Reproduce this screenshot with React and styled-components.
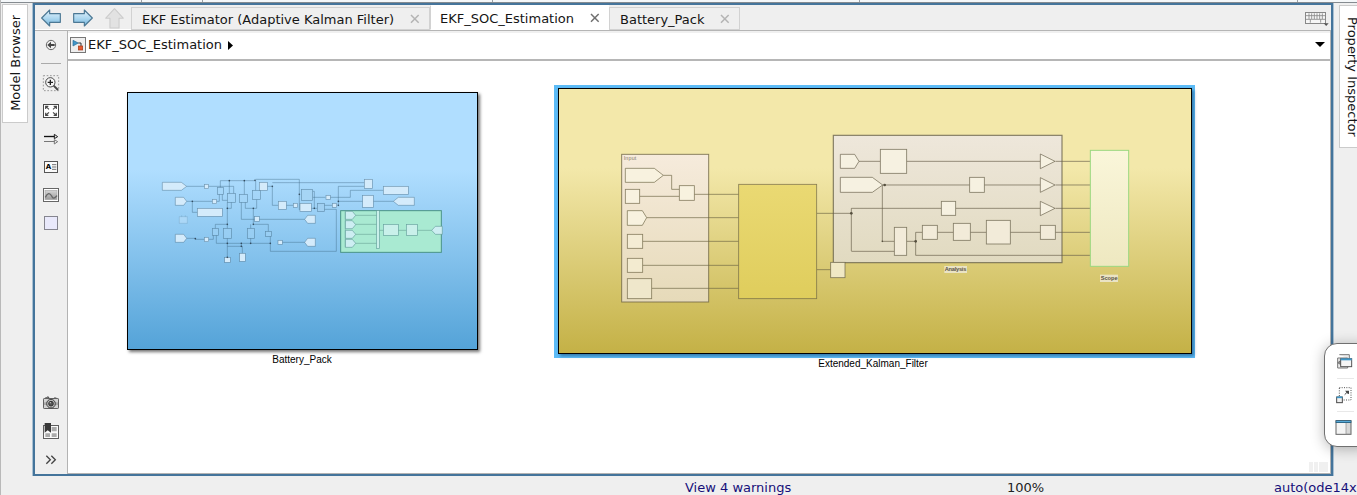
import React from "react";
import styled, { createGlobalStyle } from "styled-components";

const Global = createGlobalStyle`
  *{box-sizing:border-box}
  body{margin:0;background:#efefef;font-family:"DejaVu Sans",sans-serif;font-size:13px;color:#151515;overflow:hidden}
  svg{display:block;flex:none}
`;

const Window = styled.div`
  position:relative;width:1357px;height:495px;overflow:hidden;display:flex;flex-direction:column;background:#efefef;border-left:1px solid #b9b9b9;
`;
const TopEdge = styled.div`
  height:3px;flex:none;display:flex;background:#f4f7f9;border-bottom:1px solid #858b90;
`;
const EdgeCell = styled.div`
  width:${p => p.$w}px;border-right:1px solid #9aa0a5;
`;
const Main = styled.div`
  display:flex;height:473px;flex:none;
`;
const DockSide = styled.div`
  display:flex;flex:none;width:${p => p.$w}px;padding:${p => p.$pad};overflow:hidden;
`;
const DockTab = styled.div`
  flex:none;display:flex;justify-content:center;align-items:center;width:26px;height:${p => p.$h}px;padding-bottom:${p => p.$lift || 0}px;background:#fff;border:1px solid #cbcbcb;
`;
const DockLabel = styled.span`
  writing-mode:vertical-rl;white-space:nowrap;line-height:15px;
  transform:${p => (p.$up ? "rotate(180deg)" : "none")};
`;
const Editor = styled.div`
  width:1300px;flex:none;display:flex;flex-direction:column;border:2px solid #44749b;box-shadow:-1px 0 #a9c0d2,1px 0 #a9c0d2;
`;
const TabBar = styled.div`
  height:26px;flex:none;display:flex;align-items:flex-end;border-bottom:1px solid #b5b5b5;background:#efefef;
`;
const NavGroup = styled.div`
  width:96px;height:25px;display:flex;align-items:center;gap:12px;padding:2px 0 0 6px;border-bottom:1px solid #fff;
`;
const Tab = styled.div`
  width:${p => p.$w}px;height:${p => (p.$active ? 25 : 23)}px;display:flex;align-items:center;justify-content:space-between;
  padding:0 ${p => (p.$active ? 8 : 9)}px 0 10px;background:${p => (p.$active ? "#fff" : "#efefef")};
  border:1px solid ${p => (p.$active ? "#fff" : "#d2d2d2")};border-left-color:#d2d2d2;white-space:nowrap;
`;
const TabText = styled.span`
  line-height:16px;padding-top:${p => p.$drop || 0}px;margin-left:${p => p.$nudge || 0}px;
`;
const KeyboardSlot = styled.div`
  margin-left:auto;padding:0 2px 3px 0;
`;
const Body = styled.div`
  flex:1;display:flex;min-height:0;
`;
const Palette = styled.div`
  width:33px;flex:none;display:flex;flex-direction:column;border-right:1px solid #b3b3b3;
`;
const Tool = styled.div`
  height:28px;display:flex;justify-content:center;align-items:center;
`;
const Divider = styled.div`
  height:1px;margin:4px 6px 5px 6px;background:#aaa;
`;
const Spacer = styled.div`
  flex:1;
`;
const Pane = styled.div`
  flex:1;min-width:0;display:flex;flex-direction:column;border-right:1px solid #b3b3b3;border-bottom:1px solid #b3b3b3;
`;
const Breadcrumb = styled.div`
  height:30px;flex:none;display:flex;align-items:center;gap:2px;padding:0 5px 2px 2px;background:#fff;
  border-top:2px solid #f0f0f0;border-bottom:2px solid #b6b6b6;
`;
const CrumbMark = styled.span`
  display:flex;margin-left:4px;
`;
const DropMark = styled.span`
  display:flex;margin-left:auto;padding-bottom:2px;
`;
const Canvas = styled.div`
  position:relative;flex:1;background:#fff;
`;
const Block = styled.div`
  position:absolute;left:${p => p.$x}px;top:${p => p.$y}px;width:${p => p.$w}px;height:${p => p.$h}px;
  border:1px solid #000;background:${p => p.$bg};
  box-shadow:${p => (p.$selected ? "2px 2px 3px rgba(0,40,80,.45)" : "2px 2px 3px rgba(0,0,0,.55)")};
`;
const Halo = styled.div`
  position:absolute;left:486px;top:24px;width:641px;height:273px;background:#5dbcf7;
`;
const BlockName = styled.div`
  position:absolute;left:${p => p.$x}px;top:${p => p.$y}px;width:140px;text-align:center;
  font:10px/12px "Liberation Sans",Arial,sans-serif;color:#000;
`;
const Grip = styled.div`
  position:absolute;right:2px;bottom:1px;display:flex;gap:1px;
`;
const GripBar = styled.i`
  width:${p => p.$w}px;height:10px;background:#f0f0f0;
`;
const FloatPanel = styled.div`
  position:absolute;left:1323px;top:343px;width:50px;height:104px;display:flex;flex-direction:column;align-items:flex-start;
  padding:9px 0 0 10px;gap:7px;border:1px solid #707070;border-radius:13px;background:#fff;box-shadow:0 2px 14px rgba(0,0,0,.28);
`;
const PanelRule = styled.div`
  width:17px;height:1px;margin-left:2px;background:#e8e8e8;
`;
const Status = styled.div`
  flex:1;display:flex;padding-top:4px;line-height:16px;white-space:nowrap;
`;
const StatusItem = styled.span`
  flex:none;width:${p => p.$w}px;padding-left:${p => p.$pad || 0}px;color:${p => p.$c || "#16107a"};
`;

const Icon = ({ children, w = 54, h = 54 }) => (
  <svg width={w / 3} height={h / 3} viewBox={`0 0 ${w} ${h}`} fill="none" stroke="#484848" strokeWidth="3">{children}</svg>
);

const Close = ({ dark }) => (
  <Icon w={33} h={30}><path d="M6 3L29 26M29 3L6 26" stroke={dark ? "#707070" : "#b4b4b4"} strokeWidth="4.5" /></Icon>
);

const NavArrow = ({ flip }) => (
  <svg width="20" height="18" viewBox="0 0 60 54">
    <defs><linearGradient id="nav" x2="0" y2="1"><stop stopColor="#e3f3fc" /><stop offset=".5" stopColor="#b0d9f0" /><stop offset="1" stopColor="#70b3dc" /></linearGradient></defs>
    <path transform={flip ? "translate(60 0) scale(-1 1)" : undefined} d="M2 27L26 3V14H58V40H26V51Z" fill="url(#nav)" stroke="#4c7894" strokeWidth="3.5" strokeLinejoin="round" />
  </svg>
);

const icons = {
  hide: <Icon><circle cx="27" cy="27" r="14" strokeWidth="3" stroke="#666" /><path d="M16 27L27 17V24H38V30H27V37Z" fill="#444" stroke="none" /></Icon>,
  zoom: <Icon><rect x="4" y="5" width="46" height="45" strokeWidth="2.5" strokeDasharray="5 5" stroke="#888" /><circle cx="25" cy="25" r="14" fill="#f7f7f7" /><path d="M17 25H33M25 17V33" stroke="#222" strokeWidth="4" /><path d="M35 35L48 48" strokeWidth="6" /></Icon>,
  fit: <Icon><rect x="4.5" y="7.5" width="45" height="39" fill="#fff" /><g strokeWidth="3.5"><path d="M11 21V13H19M12 14L21 22M35 13H43V21M42 14L33 22M11 32V40H19M12 39L21 31M35 40H43V32M42 39L33 31" /></g></Icon>,
  signals: <Icon><path d="M6 19.5H38" stroke="#111" strokeWidth="4" /><path d="M37 13L47 20L37 26Z" stroke="#222" /><path d="M6 34.5H38M37 29L47 35L37 42Z" stroke="#777" /></Icon>,
  note: <svg width="18" height="18" viewBox="0 0 54 54"><rect x="7.5" y="10.5" width="39" height="33" fill="#fafafa" stroke="#555" strokeWidth="3" /><text x="11" y="34" fontFamily="DejaVu Sans" fontWeight="bold" fontSize="21">A</text><path d="M30 20H43M30 27H43M30 34H43" stroke="#555" strokeWidth="2.5" /></svg>,
  image: <Icon><defs><linearGradient id="img" x2="0" y2="1"><stop stopColor="#d5d5d5" /><stop offset="1" stopColor="#999" /></linearGradient></defs><rect x="4.5" y="7.5" width="45" height="39" fill="#fff" stroke="#666" /><rect x="9" y="13" width="36" height="28" fill="url(#img)" stroke="#aaa" strokeWidth="2" /><path d="M10 34Q20 14 29 30Q34 43 45 29" stroke="#666" strokeWidth="4" /></Icon>,
  area: <Icon><rect x="7.5" y="7.5" width="39" height="39" fill="#e9e9fb" stroke="#85858f" /></Icon>,
  camera: <Icon><path d="M9 9H15V6H20V9M36 9H43" /><rect x="4.5" y="10.5" width="45" height="30" rx="2" fill="#d2d2d2" stroke="#606060" /><path d="M6 26H48" stroke="#aaa" strokeWidth="8" /><circle cx="27" cy="26" r="13" fill="#bbb" stroke="#444" /><circle cx="27" cy="26" r="7" fill="#555" stroke="#333" /><circle cx="25" cy="23" r="2" fill="#ccc" stroke="none" /></Icon>,
  book: <Icon><rect x="4.5" y="7.5" width="45" height="39" fill="#fafafa" stroke="#5e5e5e" /><path d="M10 31H24V42H10ZM29 31H44V42H29ZM29 12H44V25H29Z" fill="#aaa" stroke="none" /><path d="M8 0H27V29L17 22L8 29Z" fill="#383838" stroke="none" /></Icon>,
  more: <Icon><path d="M13 14L25 26L13 38M28 14L40 26L28 38" stroke="#444" strokeWidth="4" /></Icon>,
};

const Keyboard = () => (
  <svg width="24" height="16" viewBox="0 0 72 48">
    <rect x="1.5" y="4.5" width="60" height="33" fill="#f6f6f6" stroke="#888" strokeWidth="3" />
    <path d="M3 14H60M3 25H60" stroke="#888" strokeWidth="2.5" />
    <path d="M12 7V24M20 7V24M28 7V24M36 7V24M44 7V24M52 7V24M16 25V35M47 25V35" stroke="#888" strokeWidth="2.5" />
    <path d="M56 37H71L63.5 45Z" fill="#555" />
  </svg>
);

const ModelIcon = () => (
  <Icon w={48} h={48}>
    <rect x="1.5" y="1.5" width="45" height="45" fill="#eee" stroke="#777" />
    <path d="M9 10V27L25 18Z" fill="#4196c9" stroke="#286b94" strokeWidth="2" />
    <path d="M25 18H33V27" stroke="#333" /><rect x="25" y="27" width="13" height="12" fill="#e65a30" stroke="#a63815" strokeWidth="2" />
  </Icon>
);

const R = ({ b, ...rest }) => <rect x={b[0]} y={b[1]} width={b[2] - b[0]} height={b[3] - b[1]} {...rest} />;

const batteryLeft = [[253, 43, 266, 56], [277, 88, 290, 101], [253, 202, 266, 215], [418, 37, 442, 61], [475, 94, 499, 118], [520, 100, 533, 112], [404, 140, 418, 154], [474, 211, 487, 223], [314, 262, 331, 277], [359, 250, 376, 274], [232, 115, 307, 139]];
const batteryPlain = [[292, 52, 311, 73], [322, 70, 346, 97], [358, 73, 382, 97], [398, 61, 421, 89], [277, 175, 295, 196], [310, 175, 334, 205], [382, 175, 403, 205], [437, 184, 454, 199]];

const BatteryPreview = () => (
  <svg width="349" height="256" viewBox="128 93 349 256" fill="none">
    <g transform="translate(120 170) scale(.33333)" stroke="#3d6580" strokeOpacity=".6" strokeWidth="2">
      <path d="M200 49H341V70M301 52V32H407V61M328 32V70M373 32V73M407 28H538V120M200 94H277M290 94H298V73M217 94V127H232M307 73V91H322M322 97V175M322 115H334V97M364 97V148H510M376 97V115H410V89M400 115V163M286 175V163H322M400 163H445V184M392 175V163M200 205H226V208H253M266 208H280V196M289 196V220H450M322 205V262M392 205V220M322 229H367V250M364 220V229M451 199V244H510M442 49H457V106H475M457 38H510M499 106H520M487 217H510" />
      {batteryPlain.map((b, i) => <R key={i} b={b} fill="#a9d7f7" fillOpacity=".35" />)}
      <g fill="#d4ebfb">
        {batteryLeft.map((b, i) => <R key={i} b={b} />)}
        <path d="M127 37H184L200 49L184 61H127ZM166 82H191L200 94L191 106H166ZM166 193H191L200 205L191 217H166Z" />
        <path d="M178 140H202V160H178Z" fillOpacity=".35" strokeOpacity=".25" /><path d="M185 135V141M196 135V141" strokeOpacity=".2" />
      </g>
      <g fill="#234" fillOpacity=".8" stroke="none">{[[217, 94], [322, 115], [322, 163], [400, 115], [400, 163], [328, 32], [373, 32], [405, 31], [457, 49], [364, 220], [364, 229], [322, 220], [392, 220], [451, 220], [226, 206], [322, 262]].map((c, i) => <circle key={i} cx={c[0]} cy={c[1]} r="2.5" />)}</g>
    </g>
    <g transform="translate(290 170) scale(.33333)" stroke="#3d6580" strokeOpacity=".6" strokeWidth="2">
      <path d="M0 38H223M68 64H73V115M68 82H106M121 82H181V61H280M103 106H127M145 106V49H223M145 94H218M250 94H310M103 118H139V244H0M0 148H44M0 217H44M64 115H82" />
      <R b={[152, 122, 454, 247]} fill="#a9ead2" stroke="#418c7c" strokeOpacity=".9" strokeWidth="3" />
      <g fill="#d4ebfb">
        {[[223, 28, 247, 55], [218, 76, 250, 112], [280, 49, 355, 73], [30, 100, 64, 124], [108, 76, 121, 88], [127, 100, 140, 112]].map((b, i) => <R key={i} b={b} />)}
        <path d="M373 82H325L310 94L325 106H373ZM76 136H53L44 148L53 160H76ZM76 205H53L44 217L53 229H76Z" />
      </g>
      <R b={[34, 58, 68, 91]} fill="#a6d5f5" /><R b={[82, 100, 103, 124]} fill="#a0d0f2" />
      <path d="M196 136H260M196 163H260M196 193H260M196 220H260M268 181H425" stroke="#4d8077" />
      <g fill="#c9f0ea" stroke="#5e9997" strokeOpacity=".9">
        {[124, 152, 181, 208].map(y => <path key={y} d={`M166 ${y}H187L197 ${y + 12}L187 ${y + 24}H166Z`} fill="#cdeef2" />)}
        <R b={[260, 122, 268, 235]} /><R b={[280, 163, 325, 196]} /><R b={[349, 163, 382, 196]} />
        <path d="M457 169H436L425 181L436 193H457Z" fill="#cdeef2" />
      </g>
      <path d="M166 124V232" stroke="#5e9997" />
      <g fill="#234" fillOpacity=".8" stroke="none">{[[28, 73], [145, 94], [145, 106], [73, 115]].map((c, i) => <circle key={i} cx={c[0]} cy={c[1]} r="2.5" />)}</g>
    </g>
  </svg>
);

const FilterPreview = () => (
  <svg width="632" height="264" viewBox="559 89 632 264" fill="none">
    <defs>
      <linearGradient id="input" x2="0" y2="1"><stop stopColor="#f6ebdc" /><stop offset="1" stopColor="#e6dab9" /></linearGradient>
      <linearGradient id="core" x2="0" y2="1"><stop stopColor="#ead973" /><stop offset="1" stopColor="#dfcd5c" /></linearGradient>
      <linearGradient id="analysis" x2="0" y2="1"><stop stopColor="#eee7db" /><stop offset="1" stopColor="#e1dac0" /></linearGradient>
      <linearGradient id="scope" x2="0" y2="1"><stop stopColor="#faf6da" /><stop offset="1" stopColor="#eee8c0" /></linearGradient>
    </defs>
    <g transform="translate(610 145) scale(.33333)" stroke="#6b6343" strokeOpacity=".78" strokeWidth="2.5">
      <R b={[35, 28, 296, 471]} fill="url(#input)" strokeWidth="3" />
      <path d="M160 91H185V133H208M89 154H208M253 148H386M110 218H386M98 289H386M98 361H386M125 430H386M620 205H669M620 374H662" />
      <R b={[386, 118, 620, 461]} fill="url(#core)" />
      <g fill="#f8f2df">
        <path d="M46 70H133L160 91L133 112H46ZM52 197H97L110 218L97 241H52Z" />
        <R b={[46, 133, 89, 175]} /><R b={[208, 122, 253, 166]} /><R b={[52, 268, 98, 310]} fill="#f4ecd4" /><R b={[52, 340, 98, 382]} fill="#f3ebd0" /><R b={[52, 401, 125, 461]} fill="#efe7cb" />
      </g>
      <text x="41" y="44" fontFamily="Liberation Sans" fontSize="16" stroke="none" fill="#857b6b" textLength="38">Input</text>
    </g>
    <g transform="translate(820 125) scale(.33333)" stroke="#645d47" strokeOpacity=".78" strokeWidth="2.5">
      <R b={[40, 31, 726, 413]} fill="url(#analysis)" strokeWidth="3.5" />
      <path d="M39 265H94M94 378V250H364M94 379H223M117 109H181M260 109H661M188 180H449M493 180H661M407 250H661M187 180V349H223M260 349H287M307 322H287V391H811M352 322H400M451 322H499M571 322H661M706 109H811M706 180H811M706 250H811M706 322H811" />
      <g fill="#f6f1e1">
        <path d="M61 88H104L117 109L104 130H61ZM61 157H157L188 180L157 202H61Z" />
        <R b={[181, 73, 260, 145]} /><R b={[449, 157, 493, 202]} /><R b={[364, 229, 407, 271]} />
        <path d="M661 87L705 109L661 131ZM661 158L705 180L661 202ZM661 229L705 250L661 272Z" />
        <g fill="#f2ebd9"><R b={[307, 301, 352, 343]} /><R b={[223, 307, 260, 391]} /><R b={[400, 295, 451, 346]} /><R b={[499, 286, 571, 357]} /><R b={[661, 301, 706, 343]} /></g>
        <R b={[32, 412, 75, 458]} fill="#f0e8c4" />
      </g>
      <R b={[811, 76, 926, 424]} fill="url(#scope)" stroke="#9bd880" strokeOpacity="1" strokeWidth="3" />
      <g fill="#554f3e" stroke="none"><circle cx="94" cy="265" r="4" /><circle cx="194" cy="180" r="4" /><circle cx="287" cy="349" r="4" /><circle cx="187" cy="349" r="2.5" /></g>
      <rect x="373" y="423" width="68" height="21" fill="#eae3c4" stroke="none" /><rect x="840" y="449" width="54" height="22" fill="#eae3c4" stroke="none" />
      <text x="374" y="439" fontFamily="Liberation Sans" fontWeight="bold" fontSize="17" stroke="none" fill="#5a5445" textLength="65">Analysis</text>
      <text x="842" y="466" fontFamily="Liberation Sans" fontWeight="bold" fontSize="17" stroke="none" fill="#5a5445" textLength="51">Scope</text>
    </g>
  </svg>
);

export default function App() {
  return (
    <Window>
      <Global />
      <TopEdge><EdgeCell $w={141} /><EdgeCell $w={61} /><EdgeCell $w={290} /><EdgeCell $w={367} /><EdgeCell $w={438} /></TopEdge>
      <Main>
        <DockSide $w={32} $pad="1px 0 0 1px">
          <DockTab $h={119} $lift={1}><DockLabel $up>Model Browser</DockLabel></DockTab>
        </DockSide>
        <Editor>
          <TabBar>
            <NavGroup>
              <NavArrow /><NavArrow flip />
              <svg width="19" height="21" viewBox="0 0 54 60"><path d="M27 2L52 29H40V57H14V29H2Z" fill="#e2e2e2" stroke="#cbcbcb" strokeWidth="3" strokeLinejoin="round" /></svg>
            </NavGroup>
            <Tab $w={299}><TabText $drop={2}>EKF Estimator (Adaptive Kalman Filter)</TabText><Close /></Tab>
            <Tab $w={179} $active><TabText $drop={2} $nudge={-1}>EKF_SOC_Estimation</TabText><Close dark /></Tab>
            <Tab $w={131}><TabText $drop={2}>Battery_Pack</TabText><Close /></Tab>
            <KeyboardSlot><Keyboard /></KeyboardSlot>
          </TabBar>
          <Body>
            <Palette>
              <Tool>{icons.hide}</Tool>
              <Divider />
              {["zoom", "fit", "signals", "note", "image", "area"].map(n => <Tool key={n}>{icons[n]}</Tool>)}
              <Spacer />
              {["camera", "book", "more"].map(n => <Tool key={n}>{icons[n]}</Tool>)}
            </Palette>
            <Pane>
              <Breadcrumb>
                <ModelIcon /><TabText>EKF_SOC_Estimation</TabText>
                <CrumbMark><svg width="5" height="9" viewBox="0 0 5 9"><path d="M0 0L5 4.5L0 9Z" /></svg></CrumbMark>
                <DropMark><svg width="10" height="5" viewBox="0 0 10 5"><path d="M0 0H10L5 5Z" /></svg></DropMark>
              </Breadcrumb>
              <Canvas>
                <Block $x={59} $y={31} $w={351} $h={258} $bg="linear-gradient(#b0deff 0%,#b0deff 30%,#54a3d8 100%)"><BatteryPreview /></Block>
                <BlockName $x={164} $y={293}>Battery_Pack</BlockName>
                <Halo />
                <Block $x={490} $y={27} $w={634} $h={266} $selected $bg="linear-gradient(#f3e8aa 0%,#f3e8aa 30%,#c4b146 100%)"><FilterPreview /></Block>
                <BlockName $x={735} $y={297}>Extended_Kalman_Filter</BlockName>
                <Grip><GripBar $w={4} /><GripBar $w={4} /><GripBar $w={9} /></Grip>
              </Canvas>
            </Pane>
          </Body>
        </Editor>
        <DockSide $w={30} $pad="2px 0 0 6px">
          <DockTab $h={143}><DockLabel>Property Inspector</DockLabel></DockTab>
        </DockSide>
      </Main>
      <Status>
        <StatusItem $w={1006} $pad={684}>View 4 warnings</StatusItem>
        <StatusItem $w={267} $c="#222">100%</StatusItem>
        <StatusItem $w={110}>auto(ode14x)</StatusItem>
      </Status>
      <FloatPanel>
        <Icon><path d="M13 5H43V18M8 15H38V45H8Z" fill="#eee" stroke="#777" /><path d="M14 21H30M8 29L19 22V36Z" fill="#888" stroke="#777" /><rect x="17" y="17" width="33" height="24" fill="#f6f6f6" stroke="#555" /><path d="M17 19H50" stroke="#3f96c7" strokeWidth="6" /></Icon>
        <PanelRule />
        <Icon><path d="M13 5H48V42H13Z" strokeDasharray="3 4" stroke="#555" /><rect x="5" y="33" width="17" height="17" fill="#f1f1f1" /><path d="M5 34H22" stroke="#3f96c7" strokeWidth="5" /><path d="M29 26L37 18" strokeWidth="3" /><path d="M30 14H42V24L38 23Z" fill="#484848" stroke="none" /></Icon>
        <PanelRule />
        <Icon><rect x="3" y="5" width="45" height="41" fill="#f4f4f4" stroke="#666" /><rect x="33" y="11" width="14" height="34" fill="#d8d8d8" stroke="#888" strokeWidth="2" /><path d="M2 8H49" stroke="#245b7a" strokeWidth="8" /><path d="M4 8H47" stroke="#61b8e9" strokeWidth="3" /></Icon>
      </FloatPanel>
    </Window>
  );
}
